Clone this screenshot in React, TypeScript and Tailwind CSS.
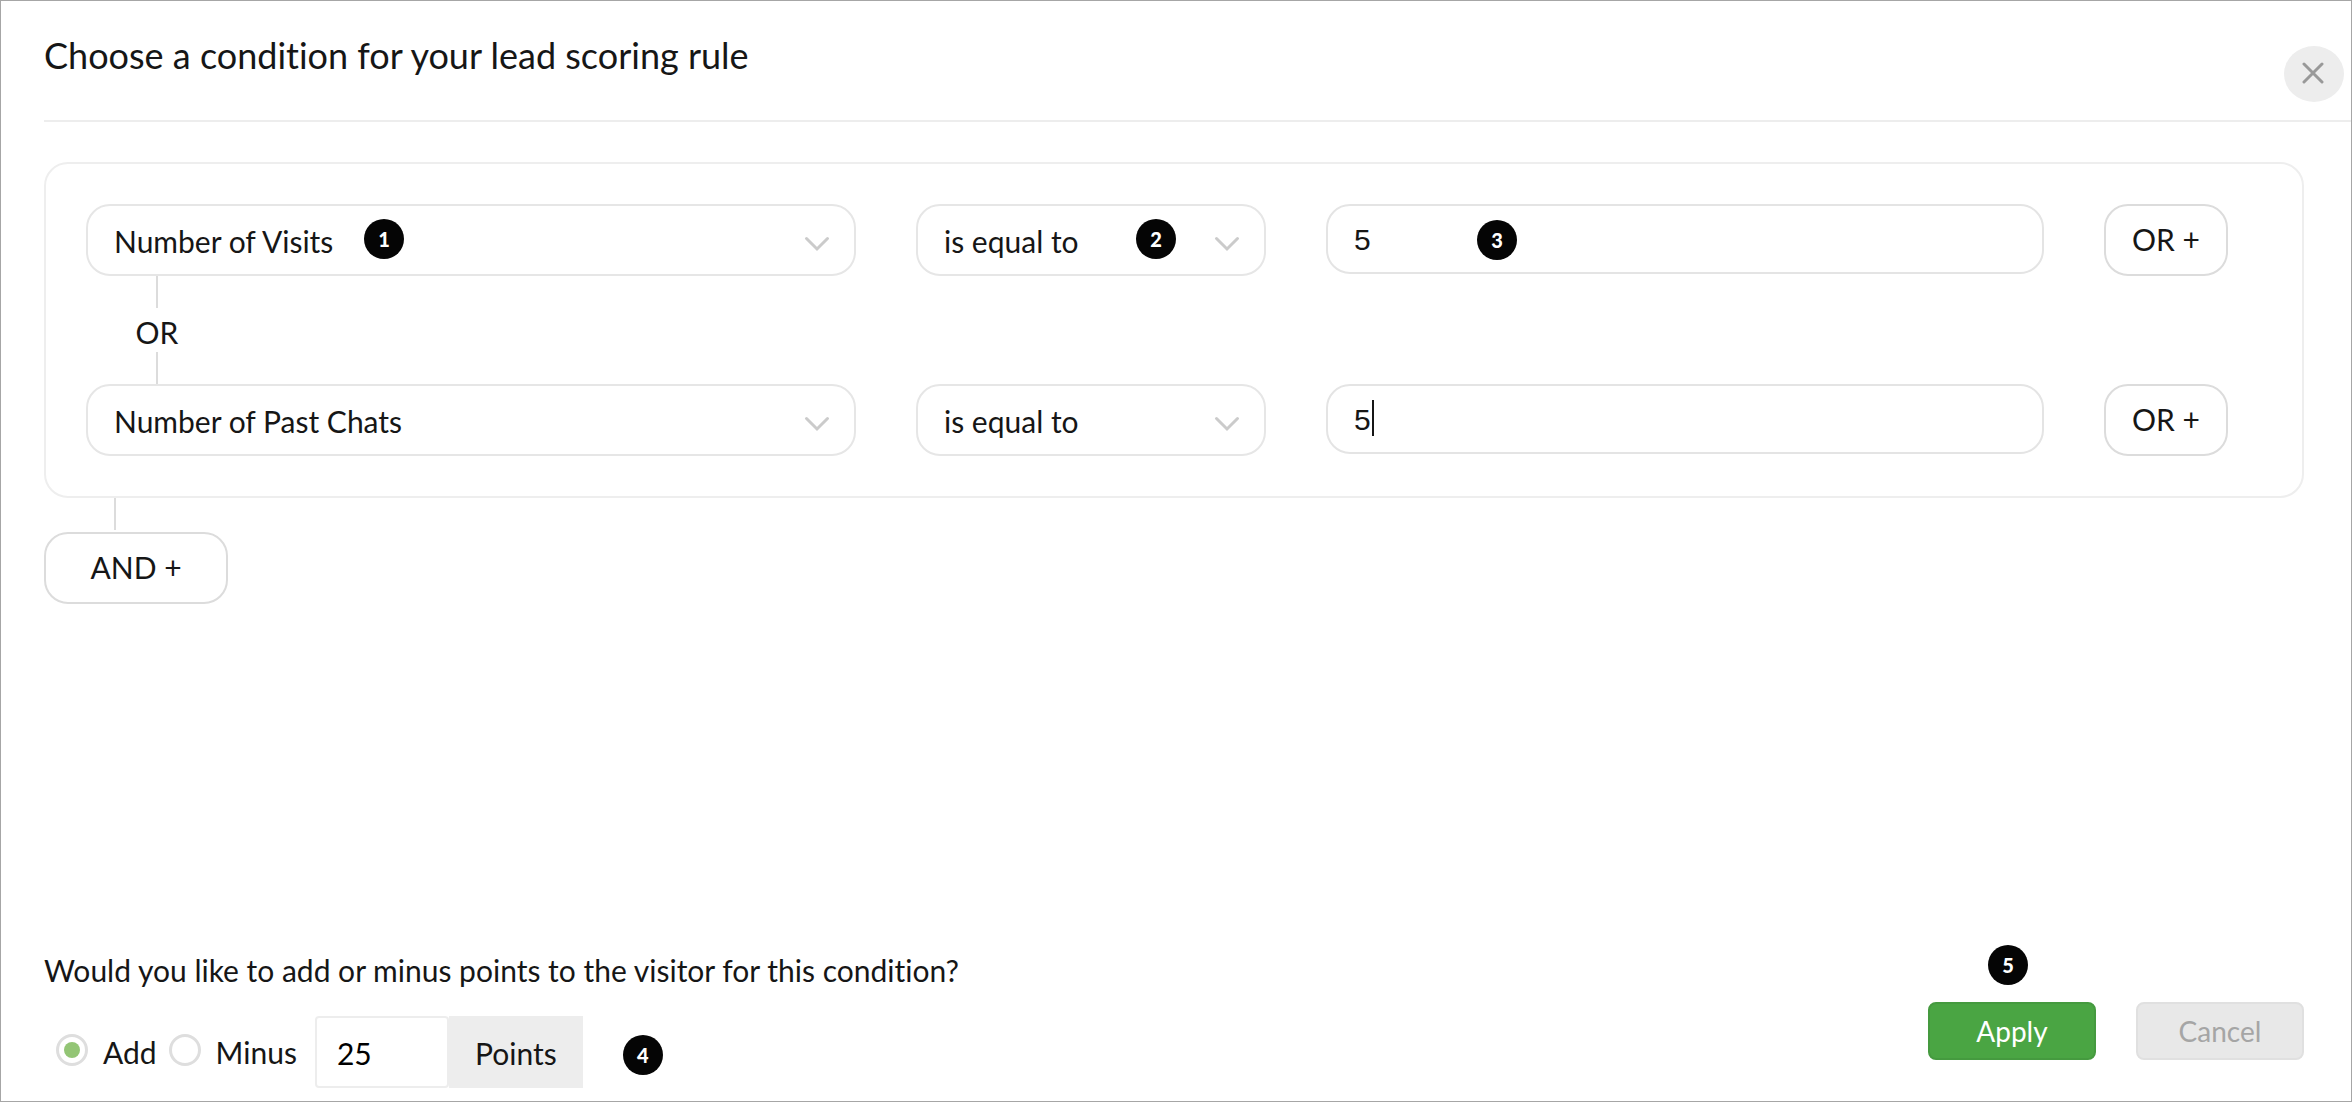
import { useState } from 'react';

interface Condition {
    id: string;
    field: string;
    operator: string;
    value: string;
}

interface StepBadgeProps {
    step: number;
    className: string;
}

interface SelectFieldProps {
    label: string;
    value: string;
    options: string[];
    badge?: React.ReactNode;
    onChange: (value: string) => void;
}

interface ConditionRowProps {
    condition: Condition;
    isFirst: boolean;
    isActive: boolean;
    onChange: (condition: Condition) => void;
}

const FIELDS = ['Number of Visits', 'Number of Past Chats'];
const OPERATORS = ['is equal to', 'is greater than', 'is less than'];

const INITIAL_CONDITIONS: Condition[] = [
    { id: 'visits', field: 'Number of Visits', operator: 'is equal to', value: '5' },
    { id: 'chats', field: 'Number of Past Chats', operator: 'is equal to', value: '5' }
];

const StepBadge = ({ step, className }: StepBadgeProps) => (
    <span
        className={`absolute flex size-10 items-center justify-center rounded-full bg-[#050505] text-xl font-black text-white pointer-events-none ${className}`}
    >
        {step}
    </span>
);

const SelectField = ({ label, value, options, badge, onChange }: SelectFieldProps) => (
    <div className="relative">
        <select
            aria-label={label}
            value={value}
            onChange={(e) => onChange(e.target.value)}
            className="block h-[72px] w-full appearance-none rounded-3xl border-2 border-[#e6e6e6] bg-white pt-0.5 pl-[26px] pr-16 outline-none"
        >
            {options.map((option) => (
                <option key={option}>{option}</option>
            ))}
        </select>
        <svg
            className="absolute right-[26px] top-8 h-4 w-[26px] pointer-events-none"
            viewBox="0 0 26 16"
            fill="none"
            stroke="#cbcbcb"
            strokeWidth="3"
            strokeLinecap="round"
        >
            <path d="M2.5 2.5 13 13 23.5 2.5" />
        </svg>
        {badge}
    </div>
);

const ConditionRow = ({ condition, isFirst, isActive, onChange }: ConditionRowProps) => (
    <div className="grid grid-cols-[770fr_350fr_718fr_124px] gap-[60px]">
        <SelectField
            label="Condition"
            value={condition.field}
            options={FIELDS}
            onChange={(field) => onChange({ ...condition, field })}
            badge={isFirst && <StepBadge step={1} className="left-[278px] top-[15px]" />}
        />
        <SelectField
            label="Operator"
            value={condition.operator}
            options={OPERATORS}
            onChange={(operator) => onChange({ ...condition, operator })}
            badge={isFirst && <StepBadge step={2} className="right-[90px] top-[15px]" />}
        />
        <div className="relative">
            <input
                type="text"
                aria-label="Value"
                value={condition.value}
                onChange={(e) => onChange({ ...condition, value: e.target.value })}
                className="block h-[70px] w-full rounded-3xl border-2 border-[#e4e4e4] px-[26px] pt-0.5 font-['Liberation_Sans',sans-serif] caret-transparent outline-none"
            />
            {isActive && (
                <span className="absolute left-[46px] top-4 h-9 w-0.5 bg-[#161616]" />
            )}
            {isFirst && <StepBadge step={3} className="left-[151px] top-4" />}
        </div>
        <button
            type="button"
            className="h-[72px] rounded-3xl border-2 border-[#dcdcdc] pb-0.5 whitespace-nowrap"
        >
            OR +
        </button>
    </div>
);

// Vertical line that joins two rows
const Connector = () => <div className="h-8 w-0.5 bg-[#dcdcdc]" />;

export default function App() {
    const [conditions, setConditions] = useState(INITIAL_CONDITIONS);
    const [mode, setMode] = useState('add');
    const [points, setPoints] = useState('25');

    const updateCondition = (next: Condition) => {
        setConditions(conditions.map((c) => (c.id === next.id ? next : c)));
    };

    return (
        <main className="flex min-h-screen flex-col border border-[#a6a6a6] bg-white pl-[43px] font-['Lato',sans-serif] text-[30px] leading-9 text-[#161616] [font-variant-ligatures:none]">
            <header className="flex h-[121px] items-start justify-between border-b-2 border-[#ededed] pr-[7px]">
                <h1 className="pt-8 text-[36px] leading-11">
                    Choose a condition for your lead scoring rule
                </h1>
                <button
                    type="button"
                    aria-label="Close"
                    className="mt-[45px] flex h-14 w-[60px] items-center justify-center rounded-[50%] bg-[#ededed]"
                >
                    <svg
                        className="size-6"
                        viewBox="0 0 24 24"
                        stroke="#999999"
                        strokeWidth="3"
                        strokeLinecap="round"
                    >
                        <path d="M2 2 20 20M20 2 2 20" />
                    </svg>
                </button>
            </header>

            <div className="pr-[47px] pt-10">
                <section className="rounded-3xl border-2 border-[#eeeeee] py-10 pl-10 pr-[74px]">
                    {conditions.map((condition, i) => (
                        <div key={condition.id}>
                            {i > 0 && (
                                <div className="flex w-[142px] flex-col items-center">
                                    <Connector />
                                    <span className="pt-1.5 pb-0.5">OR</span>
                                    <Connector />
                                </div>
                            )}
                            <ConditionRow
                                condition={condition}
                                isFirst={i === 0}
                                isActive={i === conditions.length - 1}
                                onChange={updateCondition}
                            />
                        </div>
                    ))}
                </section>
                <div className="pl-[70px] pb-0.5">
                    <Connector />
                </div>
                <button
                    type="button"
                    className="h-[72px] w-[184px] rounded-3xl border-2 border-[#dcdcdc] pb-0.5"
                >
                    AND +
                </button>
            </div>

            <footer className="mt-auto flex items-end justify-between pb-[13px] pr-[47px]">
                <div>
                    <p>Would you like to add or minus points to the visitor for this condition?</p>
                    <div className="mt-7 flex items-center">
                        <label className="flex items-center gap-[15px] pl-3">
                            <input
                                type="radio"
                                name="mode"
                                checked={mode === 'add'}
                                onChange={() => setMode('add')}
                                className="-mt-1 size-8 appearance-none rounded-full border-3 border-[#dedede] bg-clip-content p-[5px] checked:bg-[#93c575]"
                            />
                            Add
                        </label>
                        <label className="flex items-center gap-[15px] pl-3">
                            <input
                                type="radio"
                                name="mode"
                                checked={mode === 'minus'}
                                onChange={() => setMode('minus')}
                                className="-mt-1 size-8 appearance-none rounded-full border-3 border-[#dedede] bg-clip-content p-[5px] checked:bg-[#93c575]"
                            />
                            Minus
                        </label>
                        <div className="relative ml-[18px] flex">
                            <input
                                type="text"
                                aria-label="Points"
                                value={points}
                                onChange={(e) => setPoints(e.target.value)}
                                className="h-[72px] w-[134px] rounded-sm border-2 border-[#ededed] px-5 pt-0.5 text-black outline-none"
                            />
                            <span className="flex h-[72px] w-[134px] items-center justify-center bg-[#ededed] pt-0.5">
                                Points
                            </span>
                            <StepBadge step={4} className="left-[308px] top-[19px]" />
                        </div>
                    </div>
                </div>
                <div className="relative flex gap-10 pb-7 text-[28px]">
                    <StepBadge step={5} className="-top-[57px] left-[60px]" />
                    <button
                        type="button"
                        className="h-[58px] w-[168px] rounded-lg border-2 border-[#459a3f] bg-[#4aa543] text-white"
                    >
                        Apply
                    </button>
                    <button
                        type="button"
                        className="h-[58px] w-[168px] rounded-lg border-2 border-[#e0e0e0] bg-[#e8e8e8] text-[#a5a5a5]"
                    >
                        Cancel
                    </button>
                </div>
            </footer>
        </main>
    );
}
